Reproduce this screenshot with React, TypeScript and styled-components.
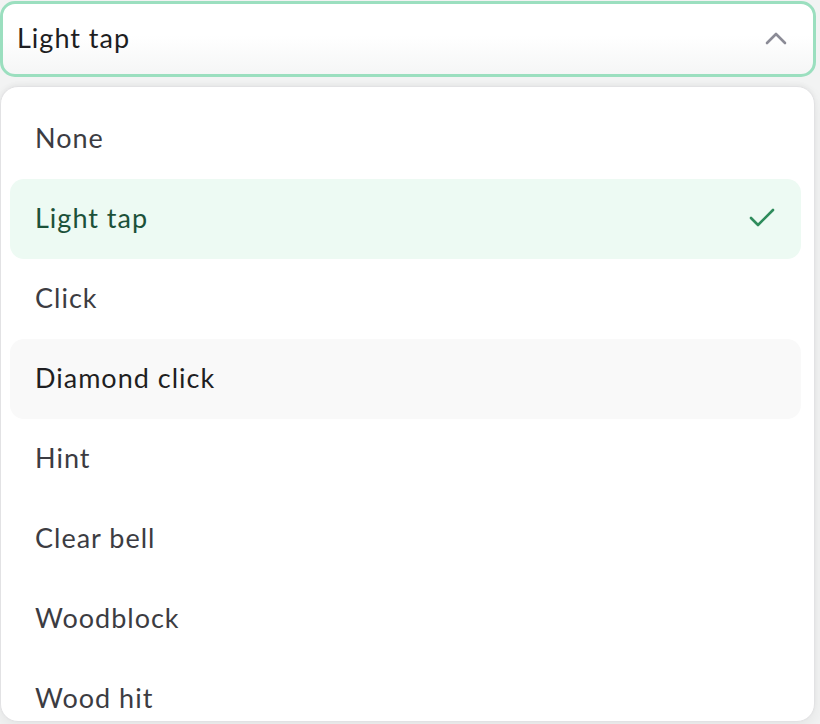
import React from "react";
import styled, { createGlobalStyle } from "styled-components";

const Global = createGlobalStyle`
  html, body { margin: 0; padding: 0; }
  body {
    background: #f2f3f3;
    font-family: Lato, "Noto Sans", sans-serif;
    width: 820px;
    height: 724px;
    overflow: hidden;
  }
`;

const Page = styled.div`
  width: 816px;
  padding-top: 1px;
  display: flex;
  flex-direction: column;
  gap: 9px;
`;

const Trigger = styled.button`
  box-sizing: border-box;
  width: 816px;
  height: 76px;
  border: 3px solid #9bdfbf;
  border-radius: 15px;
  background: linear-gradient(#ffffff 0%, #ffffff 45%, #f5f6f6 100%);
  display: flex;
  align-items: center;
  justify-content: space-between;
  padding: 0 26px 3px 14px;
  font-family: inherit;
  font-size: 27px;
  letter-spacing: 1px;
  color: #1e1e22;
  cursor: pointer;
`;

const Menu = styled.ul`
  box-sizing: border-box;
  list-style: none;
  margin: 0;
  width: 815px;
  height: 636px;
  background: #ffffff;
  border: 1px solid #e2e2e4;
  border-radius: 18px;
  box-shadow: 0 -2px 4px rgba(0, 0, 0, 0.04), 0 6px 16px rgba(0, 0, 0, 0.06);
  padding: 12px 13px 0 9px;
  display: flex;
  flex-direction: column;
  overflow: hidden;
`;

type ItemProps = { $state?: "selected" | "hover" | "none" };

const Item = styled.li<ItemProps>`
  box-sizing: border-box;
  height: 80px;
  flex: 0 0 80px;
  border-radius: 14px;
  display: flex;
  align-items: center;
  justify-content: space-between;
  padding: 0 26px 3px 25px;
  font-size: 27px;
  letter-spacing: 1px;
  background: ${(p) =>
    p.$state === "selected" ? "#edfaf3" : p.$state === "hover" ? "#f9f9f9" : "transparent"};
  color: ${(p) =>
    p.$state === "selected" ? "#1c5139" : p.$state === "hover" ? "#1f1f22" : "#3c3c42"};
`;

const Label = styled.span`
  line-height: 1;
`;

const items = [
  "None",
  "Light tap",
  "Click",
  "Diamond click",
  "Hint",
  "Clear bell",
  "Woodblock",
  "Wood hit",
];

export default function App() {
  return (
    <>
      <Global />
      <Page>
        <Trigger>
          <Label>Light tap</Label>
          <svg width="22" height="14" viewBox="0 0 22 14" fill="none">
            <path d="M2 12 L11 3 L20 12" stroke="#8b8b96" strokeWidth="2.6" strokeLinecap="round" strokeLinejoin="round" />
          </svg>
        </Trigger>
        <Menu>
          {items.map((name) => {
            const state =
              name === "Light tap" ? "selected" : name === "Diamond click" ? "hover" : "none";
            return (
              <Item key={name} $state={state}>
                <Label>{name}</Label>
                {state === "selected" && (
                  <svg width="26" height="20" viewBox="0 0 26 20" fill="none">
                    <path d="M2 10 L9 17 L24 2" stroke="#2f8c5c" strokeWidth="2.6" strokeLinecap="round" strokeLinejoin="round" />
                  </svg>
                )}
              </Item>
            );
          })}
        </Menu>
      </Page>
    </>
  );
}
